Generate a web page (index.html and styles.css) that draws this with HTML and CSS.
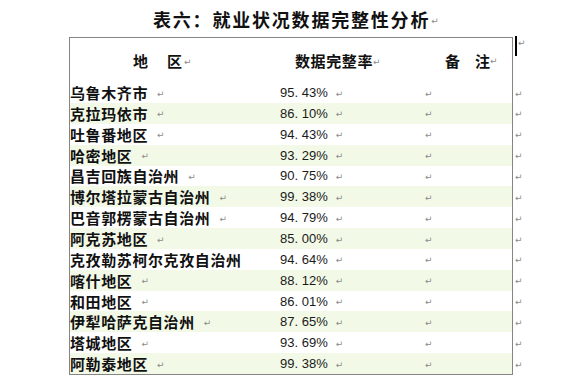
FILE: index.html
```html
<!DOCTYPE html>
<html lang="zh">
<head>
<meta charset="utf-8">
<title>表六：就业状况数据完整性分析</title>
<link rel="stylesheet" href="styles.css">
</head>
<body>
<div class="title">表六：就业状况数据完整性分析<span class="mk tmk">↵</span></div>
<div class="table">
  <div class="row head">
    <div class="c c1"><span class="h1">地　区</span><span class="mk">↵</span></div>
    <div class="c c2"><span class="h2">数据完整率</span><span class="mk">↵</span></div>
    <div class="c c3"><span class="h3">备　注</span><span class="mk">↵</span></div>
    <div class="c4 cur"><span class="caret"></span><span class="mk">↵</span></div>
  </div>
  <div class="row"><div class="c c1"><span class="lb">乌鲁木齐市</span><span class="mk lm">↵</span></div><div class="c c2"><span class="pc">95. 43%</span><span class="mk pm">↵</span></div><div class="c c3"><span class="mk">↵</span></div><div class="c4"><span class="mk">↵</span></div></div>
  <div class="row alt"><div class="c c1"><span class="lb">克拉玛依市</span><span class="mk lm">↵</span></div><div class="c c2"><span class="pc">86. 10%</span><span class="mk pm">↵</span></div><div class="c c3"><span class="mk">↵</span></div><div class="c4"><span class="mk">↵</span></div></div>
  <div class="row"><div class="c c1"><span class="lb">吐鲁番地区</span><span class="mk lm">↵</span></div><div class="c c2"><span class="pc">94. 43%</span><span class="mk pm">↵</span></div><div class="c c3"><span class="mk">↵</span></div><div class="c4"><span class="mk">↵</span></div></div>
  <div class="row alt"><div class="c c1"><span class="lb">哈密地区</span><span class="mk lm">↵</span></div><div class="c c2"><span class="pc">93. 29%</span><span class="mk pm">↵</span></div><div class="c c3"><span class="mk">↵</span></div><div class="c4"><span class="mk">↵</span></div></div>
  <div class="row"><div class="c c1"><span class="lb">昌吉回族自治州</span><span class="mk lm">↵</span></div><div class="c c2"><span class="pc">90. 75%</span><span class="mk pm">↵</span></div><div class="c c3"><span class="mk">↵</span></div><div class="c4"><span class="mk">↵</span></div></div>
  <div class="row alt"><div class="c c1"><span class="lb">博尔塔拉蒙古自治州</span><span class="mk lm">↵</span></div><div class="c c2"><span class="pc">99. 38%</span><span class="mk pm">↵</span></div><div class="c c3"><span class="mk">↵</span></div><div class="c4"><span class="mk">↵</span></div></div>
  <div class="row"><div class="c c1"><span class="lb">巴音<span class="spell">郭</span>楞蒙古自治州</span><span class="mk lm">↵</span></div><div class="c c2"><span class="pc">94. 79%</span><span class="mk pm">↵</span></div><div class="c c3"><span class="mk">↵</span></div><div class="c4"><span class="mk">↵</span></div></div>
  <div class="row alt"><div class="c c1"><span class="lb">阿克苏地区</span><span class="mk lm">↵</span></div><div class="c c2"><span class="pc">85. 00%</span><span class="mk pm">↵</span></div><div class="c c3"><span class="mk">↵</span></div><div class="c4"><span class="mk">↵</span></div></div>
  <div class="row"><div class="c c1"><span class="lb">克<span class="spell">孜</span>勒苏柯尔克孜自治州</span></div><div class="c c2"><span class="pc">94. 64%</span><span class="mk pm">↵</span></div><div class="c c3"><span class="mk">↵</span></div><div class="c4"><span class="mk">↵</span></div></div>
  <div class="row alt"><div class="c c1"><span class="lb">喀什地区</span><span class="mk lm">↵</span></div><div class="c c2"><span class="pc">88. 12%</span><span class="mk pm">↵</span></div><div class="c c3"><span class="mk">↵</span></div><div class="c4"><span class="mk">↵</span></div></div>
  <div class="row"><div class="c c1"><span class="lb">和田地区</span><span class="mk lm">↵</span></div><div class="c c2"><span class="pc">86. 01%</span><span class="mk pm">↵</span></div><div class="c c3"><span class="mk">↵</span></div><div class="c4"><span class="mk">↵</span></div></div>
  <div class="row alt"><div class="c c1"><span class="lb">伊犁哈萨克自治州</span><span class="mk lm">↵</span></div><div class="c c2"><span class="pc">87. 65%</span><span class="mk pm">↵</span></div><div class="c c3"><span class="mk">↵</span></div><div class="c4"><span class="mk">↵</span></div></div>
  <div class="row"><div class="c c1"><span class="lb">塔城地区</span><span class="mk lm">↵</span></div><div class="c c2"><span class="pc">93. 69%</span><span class="mk pm">↵</span></div><div class="c c3"><span class="mk">↵</span></div><div class="c4"><span class="mk">↵</span></div></div>
  <div class="row alt"><div class="c c1"><span class="lb">阿勒泰地区</span><span class="mk lm">↵</span></div><div class="c c2"><span class="pc">99. 38%</span><span class="mk pm">↵</span></div><div class="c c3"><span class="mk">↵</span></div><div class="c4"><span class="mk">↵</span></div></div>
</div>
</body>
</html>
```
FILE: styles.css
```css
html, body {
  margin: 0;
  padding: 0;
  background: #ffffff;
}
body {
  font-family: "Noto Sans CJK SC", "Noto Sans", sans-serif;
  color: #111;
}
.title {
  height: 37px;
  box-sizing: border-box;
  padding-left: 153px;
  display: flex;
  align-items: center;
  font-size: 18px;
  font-weight: 700;
  letter-spacing: 1.8px;
  white-space: nowrap;
}
.mk {
  font-family: "DejaVu Sans", sans-serif;
  font-size: 9px;
  font-weight: 400;
  color: #8c8c8c;
  letter-spacing: 0;
  line-height: 1;
}
.tmk {
  margin-left: 1px;
  align-self: center;
  margin-top: 5px;
}
.table {
  margin-left: 69px;
  width: 444px;
  box-sizing: border-box;
  border: 1px solid #858585;
}
.row {
  display: grid;
  grid-template-columns: 209px 145px 88px 24px;
  width: 466px;
  height: 20.86px;
  align-items: stretch;
}
.row.head {
  height: 44px;
}
.c {
  display: flex;
  align-items: center;
  white-space: nowrap;
}
.c4 {
  display: flex;
  align-items: center;
  padding-left: 3px;
}
.row.alt .c {
  background: #f2f9e6;
}
.c2 {
  padding-left: 1px;
}
.c3 {
  padding-left: 1px;
}
.head .c {
  font-size: 15px;
  font-weight: 700;
}
.h1 {
  margin-left: 63px;
  letter-spacing: 2px;
}
.h2 {
  margin-left: 15px;
  letter-spacing: 0.6px;
}
.h3 {
  margin-left: 20px;
  letter-spacing: 0;
}
.head .mk {
  margin-top: 4px;
}
.cur {
  align-items: flex-start;
  margin-top: -2px;
}
.caret {
  display: block;
  width: 2px;
  height: 20px;
  background: #000;
}
.cur .mk {
  margin-top: 7px;
  margin-left: 1px;
}
.lb {
  font-size: 15px;
  font-weight: 700;
  letter-spacing: 0.6px;
}
.lm {
  margin-left: 9px;
  margin-top: 3px;
}
.pc {
  font-family: "Liberation Sans", Arial, sans-serif;
  font-size: 13px;
  color: #1a1a1a;
}
.pm {
  margin-left: 8px;
  margin-top: 3px;
}
.c3 .mk, .c4 .mk {
  margin-top: 3px;
}
.spell {
  text-decoration: underline wavy #e23b3b;
  text-decoration-thickness: 1px;
  text-underline-offset: 3px;
}
```
